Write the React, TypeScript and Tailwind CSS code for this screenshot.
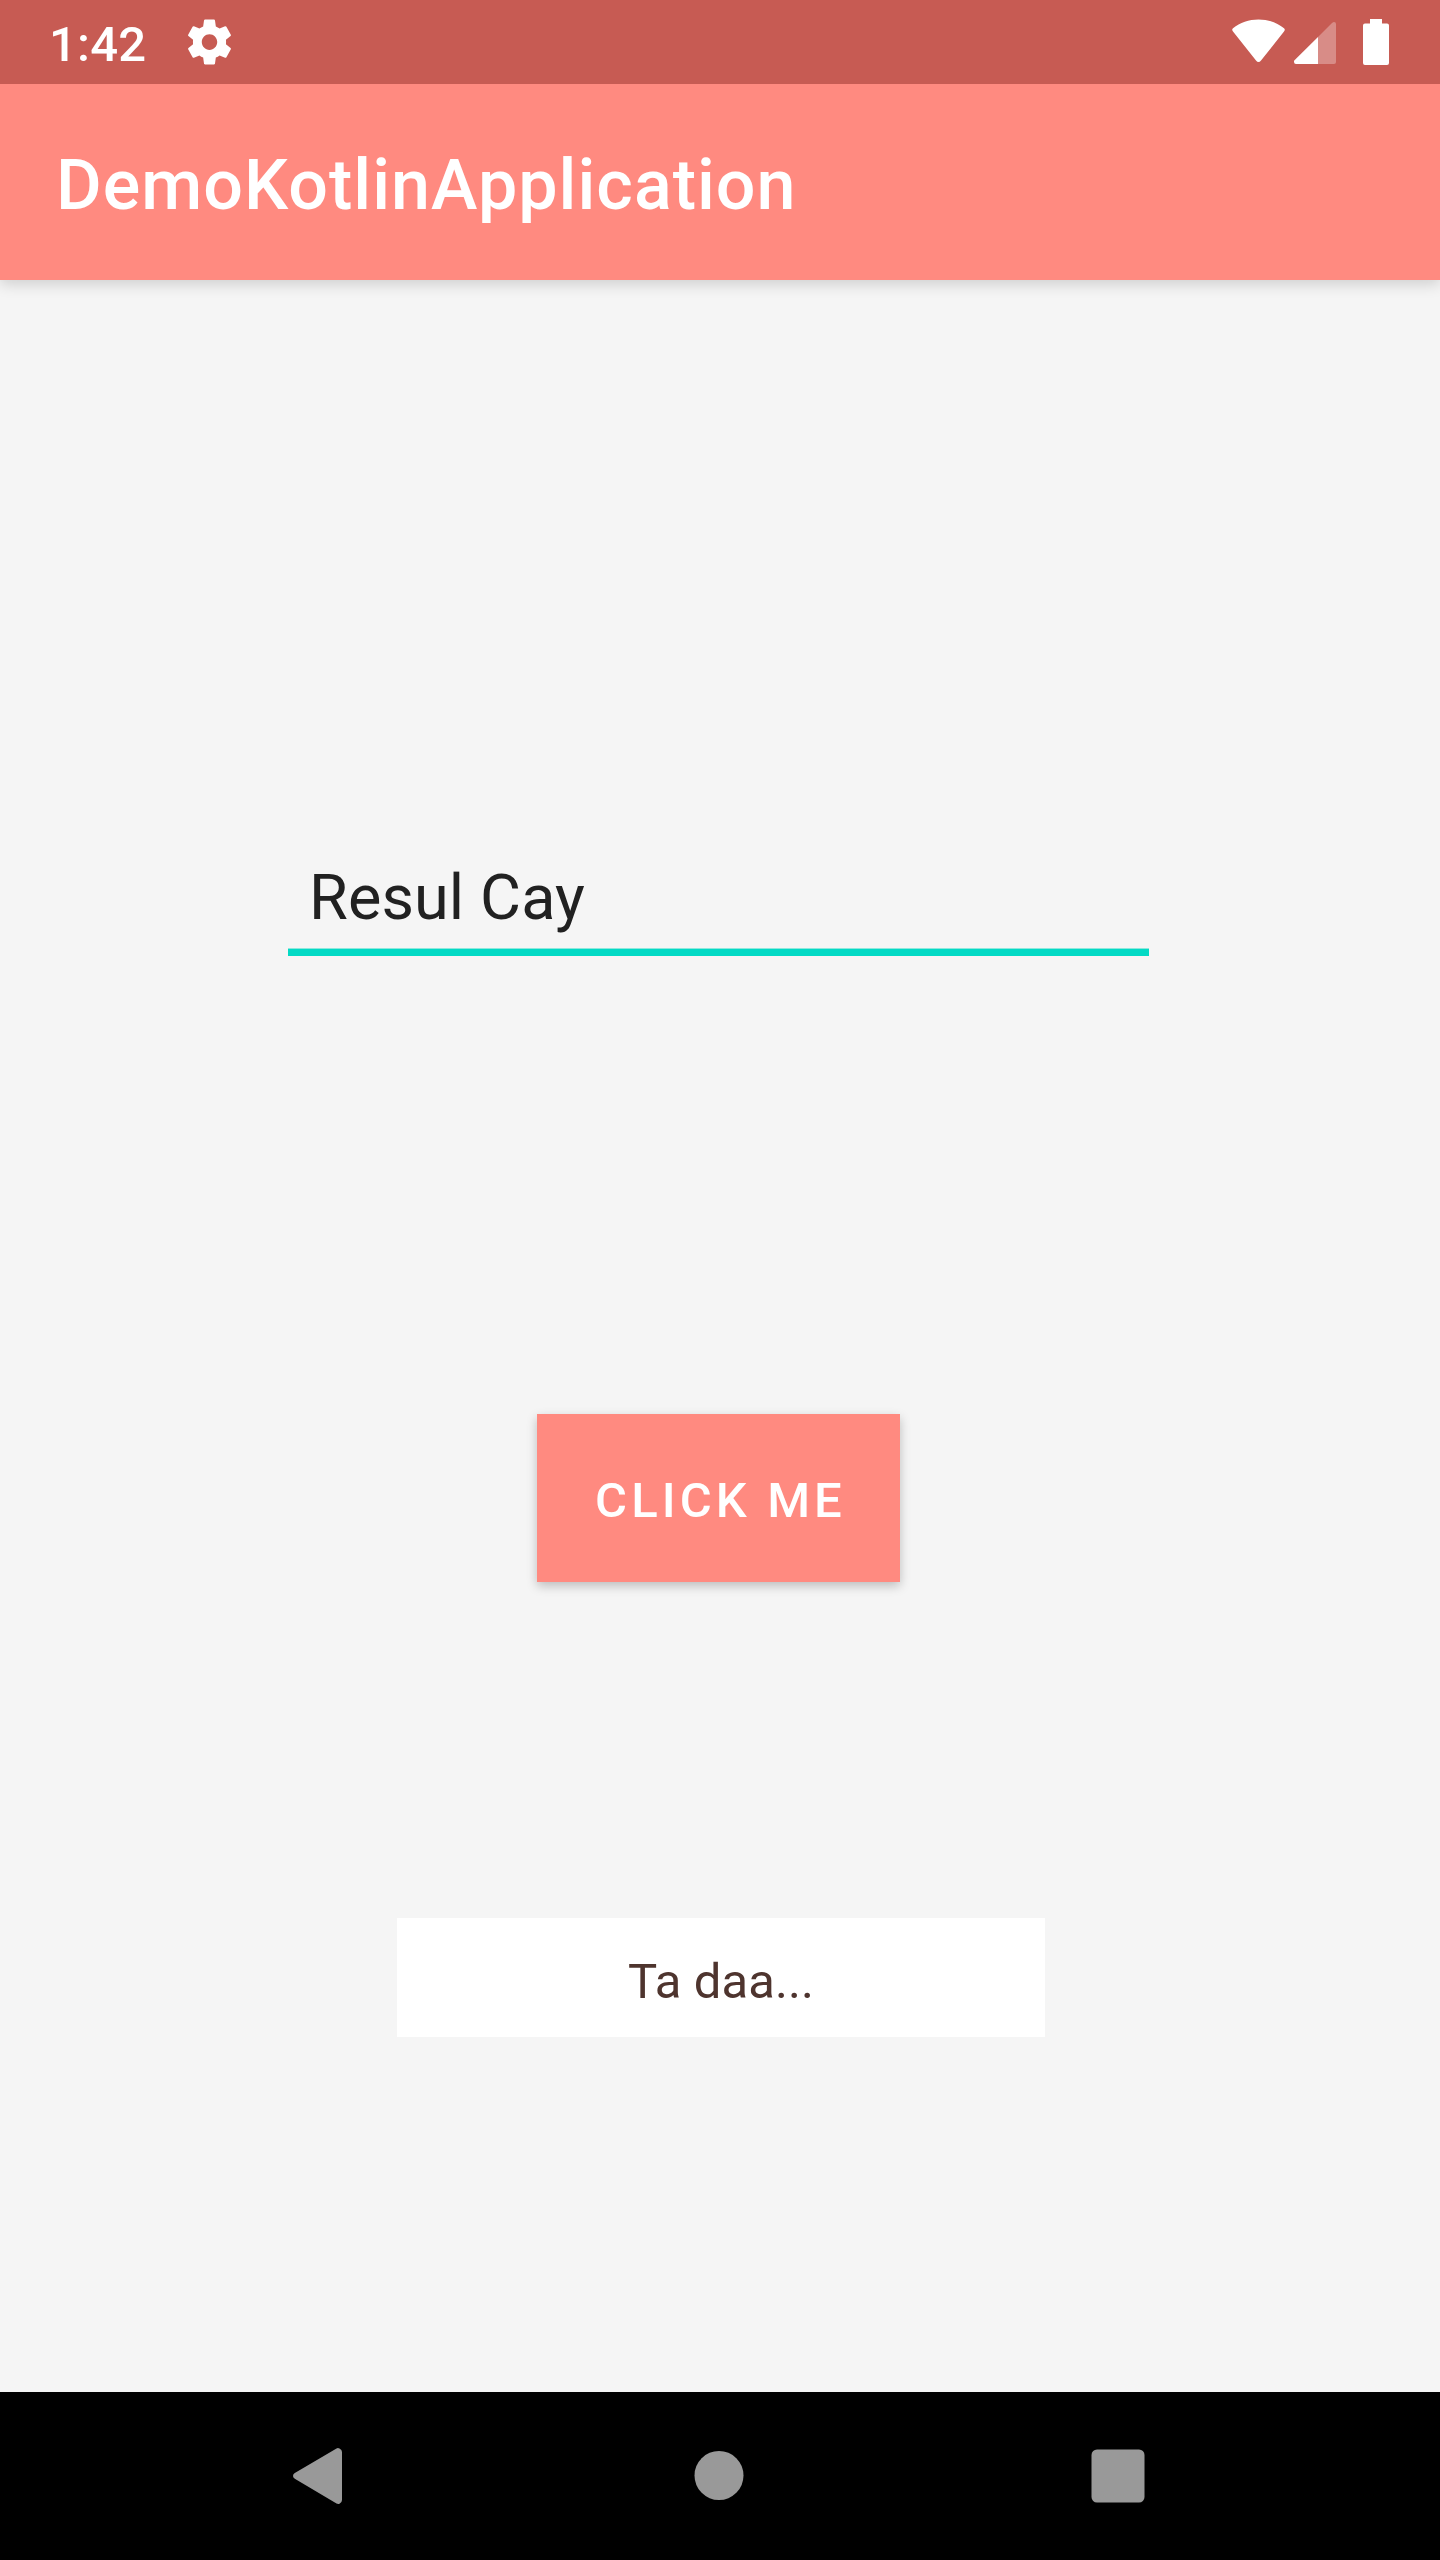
import React from "react";

function SettingsIcon() {
  return (
    <svg className="ml-[39px] h-[54px] w-[53px] shrink-0" viewBox="0 0 24 24" fill="white" preserveAspectRatio="none">
      <path d="M19.43 12.98c.04-.32.07-.64.07-.98s-.03-.66-.07-.98l2.11-1.65c.19-.15.24-.42.12-.64l-2-3.46c-.12-.22-.39-.3-.61-.22l-2.49 1c-.52-.4-1.08-.73-1.69-.98l-.38-2.65C14.46 2.18 14.25 2 14 2h-4c-.25 0-.46.18-.49.42l-.38 2.65c-.61.25-1.17.59-1.69.98l-2.49-1c-.23-.09-.49 0-.61.22l-2 3.46c-.13.22-.07.49.12.64l2.11 1.65c-.04.32-.07.65-.07.98s.03.66.07.98l-2.11 1.65c-.19.15-.24.42-.12.64l2 3.46c.12.22.39.3.61.22l2.49-1c.52.4 1.08.73 1.69.98l.38 2.65c.03.24.24.42.49.42h4c.25 0 .46-.18.49-.42l.38-2.65c.61-.25 1.17-.59 1.69-.98l2.49 1c.23.09.49 0 .61-.22l2-3.46c.12-.22.07-.49-.12-.64l-2.11-1.65zM12 15.5c-1.93 0-3.5-1.57-3.5-3.5s1.57-3.5 3.5-3.5 3.5 1.57 3.5 3.5-1.57 3.5-3.5 3.5z" />
    </svg>
  );
}

function StatusBar() {
  return (
    <header className="relative z-10 flex h-[84px] shrink-0 items-start justify-between bg-[#c75b53] pl-[49px] pr-[51px]">
      <div className="flex items-start">
        <span className="w-[95px] text-[49px] leading-[89px] font-medium tracking-[0.2px] whitespace-nowrap">1:42</span>
        <span className="pt-[15px]">
          <SettingsIcon />
        </span>
      </div>
      <div className="flex h-[84px]">
        <svg className="h-[84px] w-[53px]" viewBox="0 0 53 84" fill="white">
          <path d="M1 31.5Q-.6 29.8 1 28.3C8 22.400 17 19.400 26.500 19.400S45 22.400 52 28.300Q53.600 29.800 52 31.500L29 60.500Q26.500 63.500 24 60.500Z" />
        </svg>
        <svg className="ml-[9px] h-[84px] w-[42px]" viewBox="0 0 42 84" fill="white">
          <path d="M24 37V64H2Q0 64 0 62V61Q0 60.500 1 59.800Z" />
          <path d="M24 37L38 23Q39.200 22 40 22Q42 22 42 24V62Q42 64 40 64H24Z" fillOpacity="0.3" />
        </svg>
        <svg className="ml-[27px] h-[84px] w-[26px]" viewBox="0 0 26 84" fill="white">
          <path d="M7 19H19V23.500H24Q26 23.500 26 25.500V63Q26 65 24 65H2Q0 65 0 63V25.500Q0 23.500 2 23.500H7Z" />
        </svg>
      </div>
    </header>
  );
}

function NavigationBar() {
  return (
    <nav className="flex h-[168px] shrink-0 justify-between bg-black pl-[293px] pr-[295px]">
      <svg className="h-[168px] w-[49px]" viewBox="0 0 49 168" fill="#999999">
        <path d="M43.500 56.400Q45 55.700 46.500 56.500Q49 57.500 49 60V108Q49 110.500 46.500 111.700Q45 112.300 43.500 111.500L1.800 86.800Q0 85.500 0 84Q0 82.200 1.800 81Z" />
      </svg>
      <svg className="ml-[4px] h-[168px] w-[50px]" viewBox="0 0 50 168" fill="#999999">
        <circle cx="25" cy="83.500" r="24.500" />
      </svg>
      <svg className="h-[168px] w-[54px]" viewBox="0 0 54 168" fill="#999999">
        <rect x=".5" y="57.500" width="53" height="53" rx="5.500" />
      </svg>
    </nav>
  );
}

export default function App() {
  return (
    <div className="flex h-[2560px] w-[1440px] flex-col overflow-hidden bg-[#f5f5f5] font-[Roboto,sans-serif] text-white">
      <StatusBar />
      <div className="relative h-[196px] shrink-0 bg-[#ff8a80] pl-14 shadow-[0_4px_14px_rgba(0,0,0,0.16)]">
        <h1 className="text-[70px] leading-[202px] font-medium tracking-[1.02px] whitespace-nowrap">DemoKotlinApplication</h1>
      </div>
      <main className="flex grow flex-col">
        <div className="mt-[568px] ml-[288px] h-[108px] w-[861px] border-b-[7px] border-[#03dac5] pl-[21px] shadow-[inset_0_-1px_0_#8de8dd]">
          <p className="text-[63px] leading-[99px] tracking-[0.1px] whitespace-nowrap text-[#212121]">Resul Cay</p>
        </div>
        <button className="mt-[458px] ml-[537px] h-[168px] w-[363px] bg-[#ff8a80] pt-[5px] pl-1 text-center text-[49px] font-medium tracking-[4.1px] whitespace-nowrap shadow-[0_4px_10px_rgba(0,0,0,0.23)]">
          CLICK ME
        </button>
        <p className="mt-[336px] ml-[397px] h-[119px] w-[648px] bg-white text-center text-[49px] leading-[127px] tracking-[0.1px] text-[#4e342e]">
          Ta daa...
        </p>
      </main>
      <NavigationBar />
    </div>
  );
}
